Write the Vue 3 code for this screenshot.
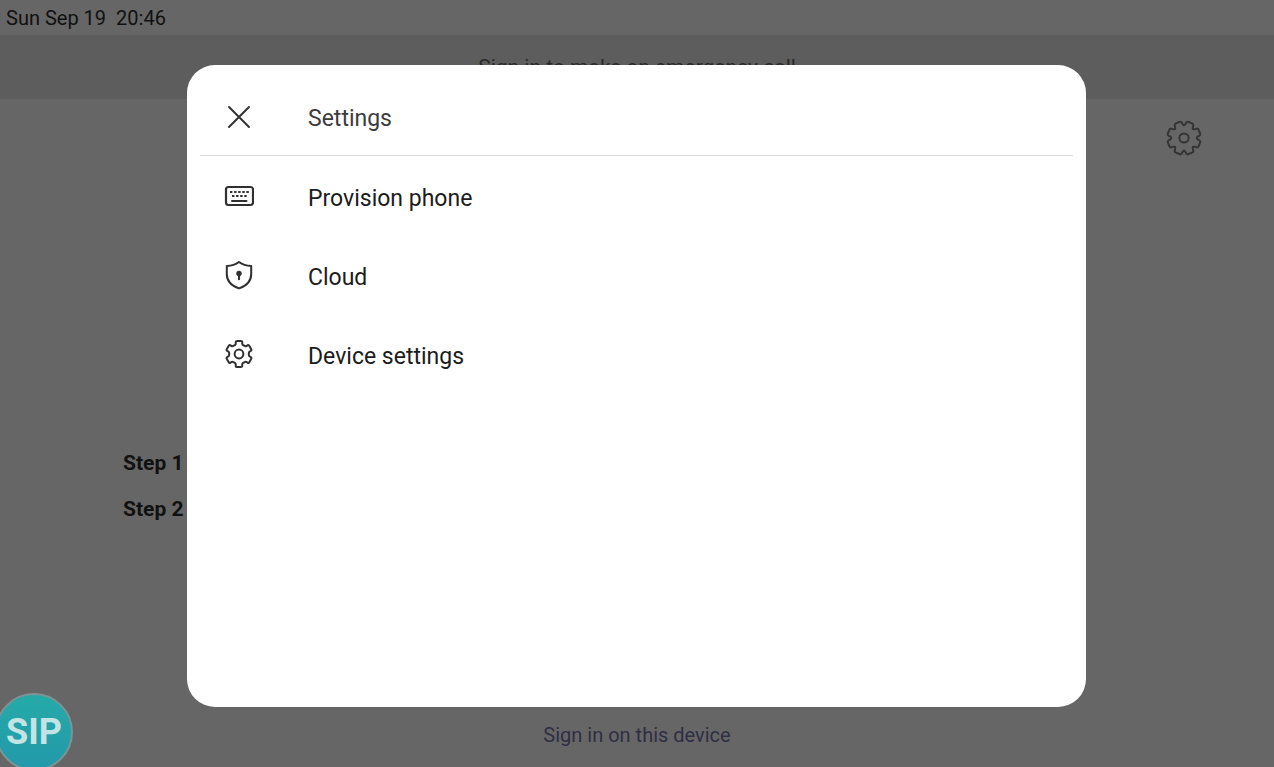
<script setup>
function gearPath(teeth, outer, inner, topHalf, rootHalf, offset) {
  const step = 360 / teeth
  const points = []
  for (let i = 0; i < teeth; i++) {
    const a = i * step + offset
    for (const [r, d] of [[inner, -step / 2 + rootHalf], [outer, -topHalf], [outer, topHalf], [inner, step / 2 - rootHalf]]) {
      const t = ((a + d) * Math.PI) / 180
      points.push([r * Math.sin(t), -r * Math.cos(t)])
    }
  }
  const n = points.length
  const mix = (p, q, k) => [p[0] + (q[0] - p[0]) * k, p[1] + (q[1] - p[1]) * k]
  const fmt = (p) => p.map((v) => v.toFixed(2)).join(' ')
  let d = ''
  for (let i = 0; i < n; i++) {
    const prev = points[(i + n - 1) % n]
    const cur = points[i]
    const next = points[(i + 1) % n]
    d += `${i ? 'L' : 'M'}${fmt(mix(cur, prev, 0.25))}Q${fmt(cur)} ${fmt(mix(cur, next, 0.25))}`
  }
  return d + 'Z'
}

const smallGear = gearPath(6, 13.4, 10, 14, 11, 0)
const largeGear = gearPath(8, 17, 12.8, 12, 3, 22.5)

const items = [
  { id: 'keyboard', label: 'Provision phone' },
  { id: 'shield', label: 'Cloud' },
  { id: 'gear', label: 'Device settings' },
]
const steps = ['Step 1', 'Step 2']
</script>

<template>
  <div class="screen">
    <div class="page">
      <header class="status"><span>Sun Sep 19</span><time>20:46</time></header>
      <div class="banner">Sign in to make an emergency call</div>
      <div class="toolbar">
        <button class="plain" type="button" aria-label="Settings">
          <svg width="36" height="36" viewBox="-18 -18 36 36" fill="none" stroke="#343434" stroke-width="2">
            <path :d="largeGear" />
            <circle r="4.6" />
          </svg>
        </button>
      </div>
      <ol class="steps">
        <li v-for="step in steps" :key="step">{{ step }}</li>
      </ol>
      <footer class="footer"><a href="#">Sign in on this device</a></footer>
      <button class="sip" type="button">SIP</button>
    </div>

    <div class="overlay">
      <section class="dialog" role="dialog" aria-labelledby="dialog-title">
        <header class="row head">
          <button class="plain icon" type="button" aria-label="Close">
            <svg width="30" height="30" viewBox="-15 -15 30 30" fill="none" stroke="#333" stroke-width="2" stroke-linecap="round">
              <path d="M-10-10L10 10M10-10L-10 10" />
            </svg>
          </button>
          <h1 id="dialog-title" class="label">Settings</h1>
        </header>
        <button v-for="item in items" :key="item.id" class="plain row" type="button">
          <span class="icon">
            <svg width="30" height="30" viewBox="-15 -15 30 30" fill="none" stroke="#303030" stroke-width="2" stroke-linecap="round" stroke-linejoin="round">
              <template v-if="item.id === 'keyboard'">
                <rect x="-13" y="-9" width="27" height="18" rx="2.5" stroke-width="2.2" />
                <path d="M-7 5H7.5" stroke-width="2" />
                <path d="M-9-4H10" stroke-width="2" stroke-linecap="butt" stroke-dasharray="2.4 1.7" />
                <path d="M-7 0H8" stroke-width="2" stroke-linecap="butt" stroke-dasharray="2.4 1.7" />
              </template>
              <template v-else-if="item.id === 'shield'">
                <path d="M0-13C3.5-10.4 7.5-9.2 12.2-9V-1C12.2 6 8 10.8 0 13.4C-8 10.8-12.2 6-12.2-1V-9C-7.5-9.2-3.5-10.4 0-13Z" />
                <circle cy="-1.6" r="2.7" fill="#303030" stroke="none" />
                <path d="M0-1V4.2" />
              </template>
              <template v-else>
                <path :d="smallGear" />
                <circle r="4.4" />
              </template>
            </svg>
          </span>
          <span class="label">{{ item.label }}</span>
        </button>
      </section>
    </div>
  </div>
</template>

<style>
body {
  margin: 0;
}
</style>

<style scoped>
.screen {
  position: relative;
  min-height: 100vh;
  overflow: hidden;
  font-family: Roboto, "Liberation Sans", sans-serif;
}
.page {
  display: flex;
  flex-direction: column;
  min-height: 100vh;
  background: #666;
  color: #111;
}
.status {
  display: flex;
  gap: 10px;
  padding: 1px 6px 0;
  line-height: 34px;
  font-size: 20px;
}
.banner {
  background: #5d5d5d;
  color: #2a2a2a;
  text-align: center;
  line-height: 64px;
  font-size: 21px;
}
.plain {
  border: 0;
  padding: 0;
  background: none;
  font: inherit;
  color: inherit;
  text-align: left;
}
.toolbar {
  display: flex;
  justify-content: flex-end;
  padding: 21px 72px 0;
}
.toolbar svg {
  display: block;
}
.steps {
  flex: 1;
  margin: 0;
  padding: 284px 0 0 123px;
  list-style: none;
  font-size: 21px;
  font-weight: 700;
  line-height: 46px;
}
.footer {
  padding-bottom: 16px;
  text-align: center;
  font-size: 20px;
  line-height: 32px;
}
.footer a {
  color: #2f2e44;
  text-decoration: none;
}
.sip {
  position: absolute;
  left: -5px;
  bottom: -4px;
  width: 78px;
  height: 78px;
  padding: 0;
  border: 2px solid #7d9496;
  border-radius: 50%;
  background: linear-gradient(#25aaa8, #2399aa);
  color: #c3e4e4;
  font: 700 36px Roboto, sans-serif;
}
.overlay {
  position: absolute;
  inset: 0;
  display: grid;
  padding: 65px 188px 60px 187px;
}
.dialog {
  display: flex;
  flex-direction: column;
  padding: 12px 13px;
  border-radius: 28px;
  background: #fff;
  color: #1c1c1c;
}
.row {
  display: flex;
  align-items: center;
  gap: 54px;
  height: 79px;
  padding: 0 24px;
  font-size: 23px;
  box-sizing: border-box;
}
.head {
  padding-top: 2px;
  border-bottom: 1px solid #dcdcdc;
  color: #3c3c3c;
}
.label {
  margin: 0;
  padding-top: 6px;
  font-size: 23px;
  font-weight: 400;
}
.head .label {
  padding-top: 2px;
}
.icon {
  display: block;
  height: 30px;
}
.icon svg {
  display: block;
}
</style>
